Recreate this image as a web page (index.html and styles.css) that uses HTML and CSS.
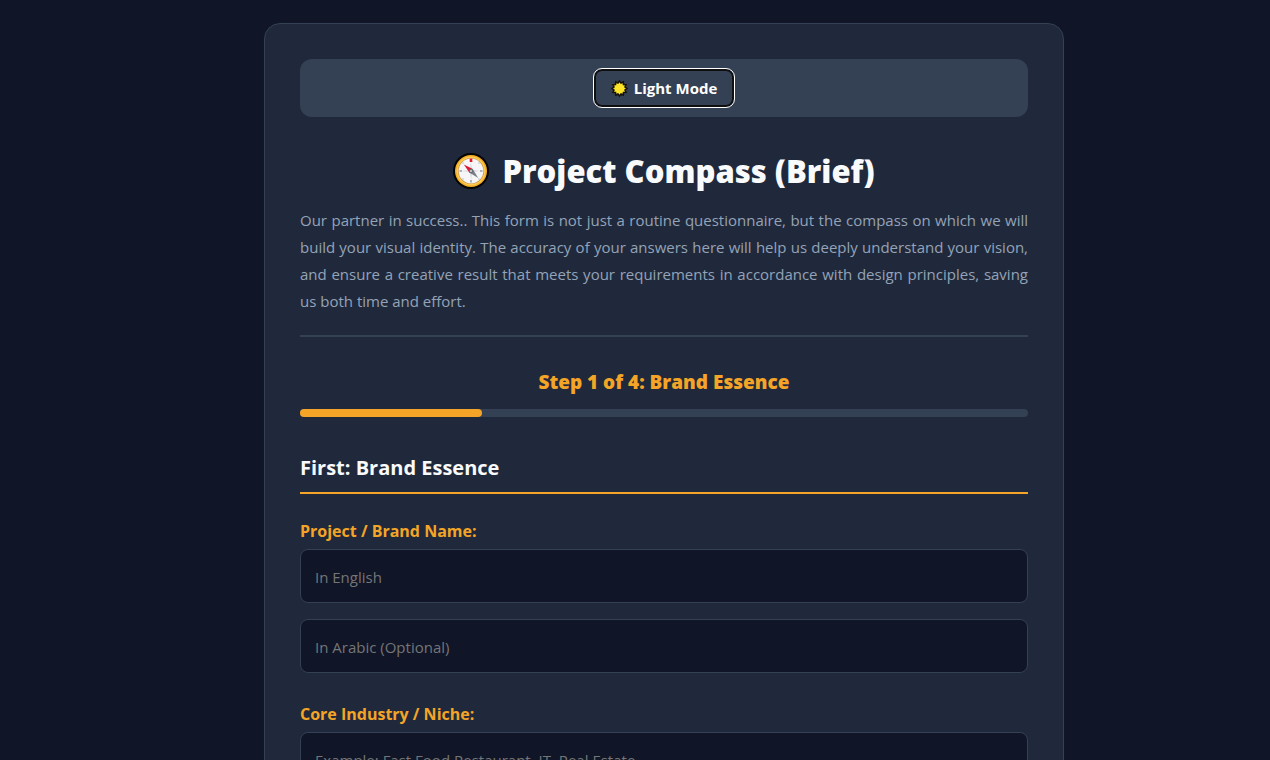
FILE: index.html
```html
<!DOCTYPE html>
<html lang="en">
<head>
  <meta charset="UTF-8">
  <meta name="viewport" content="width=device-width, initial-scale=1.0">
  <title>Project Compass (Brief)</title>
  <link rel="stylesheet" href="styles.css">
</head>
<body>

  <main class="container">
    <div class="top-bar">
      <button type="button" class="theme-btn" id="themeBtn">
        <svg class="sun-icon" viewBox="-1 -1 18 18" aria-hidden="true">
          <polygon points="16,8 13.8,9.6 14.9,12 12.2,12.2 12,14.9 9.6,13.8 8,16 6.4,13.8 4,14.9 3.8,12.2 1.1,12 2.2,9.6 0,8 2.2,6.4 1.1,4 3.8,3.8 4,1.1 6.4,2.2 8,0 9.6,2.2 12,1.1 12.2,3.8 14.9,4 13.8,6.4" fill="#fde428" stroke="#15130c" stroke-width="1.600"/>
        </svg>
        <span>Light Mode</span>
      </button>
    </div>

    <header>
      <h1>
        <svg class="compass-icon" viewBox="0 0 36 36" aria-hidden="true">
          <circle cx="18" cy="18" r="18" fill="#050505"/>
          <circle cx="18" cy="18" r="16" fill="#f3ad25"/>
          <circle cx="18" cy="18" r="14.500" fill="#fbcb52"/>
          <circle cx="18" cy="18" r="13" fill="#c98b3c"/>
          <circle cx="18" cy="18" r="12.400" fill="#f6f6f8"/>
          <path d="M18 9l1 7.800L27 18l-7.800 1L18 27l-1-7.800L9 18l7.800-1z" fill="#d9dade"/>
          <path d="M18 27v2.500M6.500 18H9M27 18h2.500" stroke="#aeb2bb" stroke-width="2"/>
          <path d="M9.500 9.500l1 1M25.500 10.500l1-1M9.500 26.500l1-1M25.500 25.500l1 1" stroke="#c3c5cb" stroke-width="1.500"/>
          <path d="M18 5.600v3.400" stroke="#e8182c" stroke-width="2.600"/>
          <path d="M10.800 11.400l9 4.600-3.400 3.600z" fill="#dc1630"/>
          <path d="M25.200 25l-9-5.400 3.600-3.600z" fill="#7c8088"/>
          <circle cx="18" cy="18" r="2.200" fill="#676c75"/>
          <circle cx="18" cy="18" r="1" fill="#d8dade"/>
        </svg>
        <span>Project Compass (Brief)</span>
      </h1>
      <p>Our partner in success.. This form is not just a routine questionnaire, but the compass on which we will build your visual identity. The accuracy of your answers here will help us deeply understand your vision, and ensure a creative result that meets your requirements in accordance with design principles, saving us both time and effort.</p>
    </header>

    <div class="step-text">Step 1 of 4: Brand Essence</div>
    <div class="progress">
      <div class="progress-fill"></div>
    </div>

    <form>
      <h2>First: Brand Essence</h2>

      <div class="form-group">
        <label for="brandName">Project / Brand Name:</label>
        <input type="text" id="brandName" placeholder="In English">
        <input type="text" id="brandNameAr" placeholder="In Arabic (Optional)" aria-label="Project / Brand Name in Arabic">
      </div>

      <div class="form-group">
        <label for="industry">Core Industry / Niche:</label>
        <input type="text" id="industry" placeholder="Example: Fast Food Restaurant, IT, Real Estate">
      </div>
    </form>
  </main>

</body>
</html>
```
FILE: styles.css
```css
* {
  box-sizing: border-box;
}

body {
  margin: 0;
  padding: 23px 0 23px 58px;
  background-color: #101528;
  color: #f8fafc;
  font-family: "Segoe UI", "Open Sans", "Noto Sans", sans-serif;
  font-size: 15px;
  line-height: 27px;
}

.container {
  max-width: 800px;
  margin: 0 auto;
  padding: 35px;
  background-color: #20293b;
  border: 1px solid #344053;
  border-radius: 16px;
}

.top-bar {
  display: flex;
  justify-content: center;
  padding: 10px;
  background-color: #344053;
  border-radius: 12px;
}

.theme-btn {
  display: flex;
  align-items: center;
  gap: 6px;
  height: 38px;
  padding: 0 15px;
  background-color: #344053;
  color: #fff;
  border: 2px solid #101010;
  border-radius: 8px;
  outline: 1px solid #fff;
  font-family: inherit;
  font-size: 15px;
  font-weight: 700;
  cursor: pointer;
}

.sun-icon {
  width: 17px;
  height: 17px;
}

header {
  margin-top: 32px;
  padding-bottom: 20px;
  border-bottom: 2px solid #344053;
}

h1 {
  display: flex;
  justify-content: center;
  align-items: center;
  gap: 13px;
  margin: 0 0 14px;
  font-size: 31px;
  font-weight: 800;
  line-height: 44px;
}

.compass-icon {
  width: 36px;
  height: 36px;
}

header p {
  margin: 0;
  color: #94a3b8;
  text-align: justify;
}

.step-text {
  margin: 32px 0 13px;
  color: #f4a527;
  font-size: 19px;
  font-weight: 800;
  text-align: center;
}

.progress {
  height: 8px;
  background-color: #344053;
  border-radius: 4px;
}

.progress-fill {
  width: 25%;
  height: 100%;
  background-color: #f4a527;
  border-radius: 4px;
}

h2 {
  margin: 32px 0 24px;
  padding-bottom: 5px;
  border-bottom: 2px solid #f4a527;
  font-size: 20px;
  font-weight: 700;
  line-height: 38px;
}

.form-group {
  margin-bottom: 28px;
}

label {
  display: block;
  margin-bottom: 4px;
  color: #f4a527;
  font-size: 16px;
  font-weight: 700;
}

input {
  display: block;
  width: 100%;
  height: 54px;
  padding: 2px 14px 0;
  background-color: #101528;
  color: #f8fafc;
  border: 1px solid #344053;
  border-radius: 8px;
  font-family: inherit;
  font-size: 15px;
}

input + input {
  margin-top: 16px;
}

input::placeholder {
  color: #757575;
}
```
